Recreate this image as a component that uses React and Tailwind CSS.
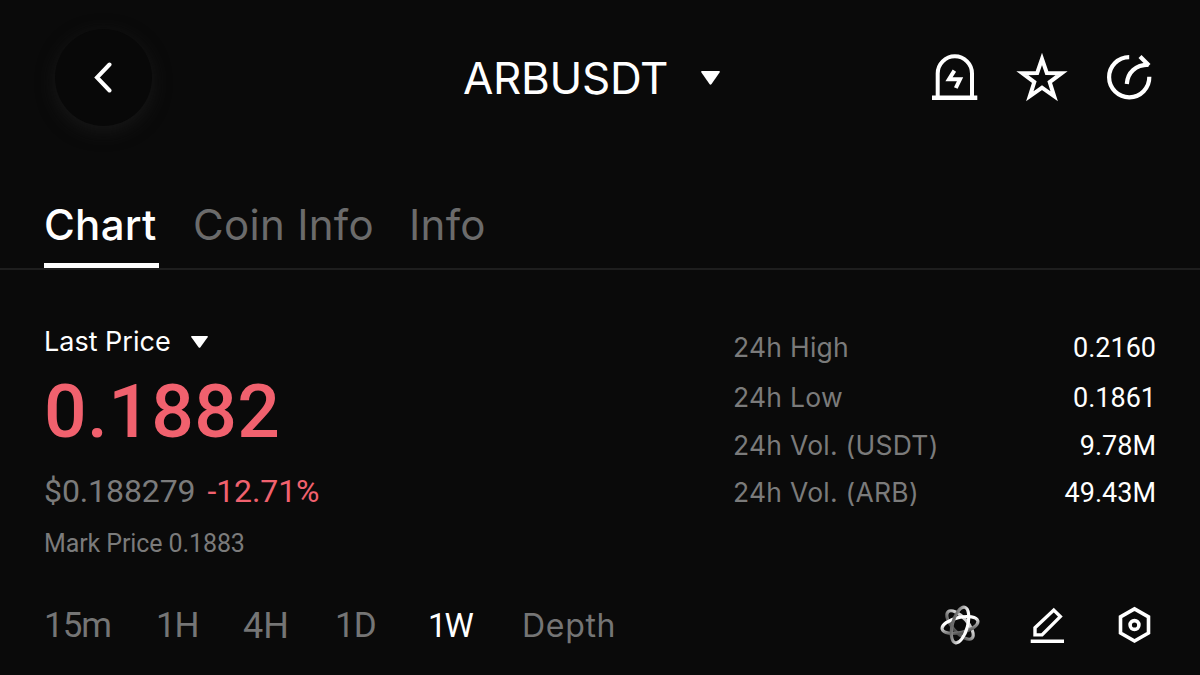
const TABS = [
  { label: 'Chart', active: true, className: 'w-[115px] tracking-[0.3px]' },
  { label: 'Coin Info', className: 'ml-[34px] w-[180px] tracking-[0.3px]' },
  { label: 'Info', className: 'ml-[36px] tracking-[0.3px]' },
]

const STATS = [
  { label: '24h High', value: '0.2160', className: 'h-[50px]' },
  { label: '24h Low', value: '0.1861', className: 'h-[50px]' },
  { label: '24h Vol. (USDT)', value: '9.78M', className: 'h-[46px]' },
  { label: '24h Vol. (ARB)', value: '49.43M', className: 'h-[48px]' },
]

const INTERVALS = [
  { label: '15m', className: 'w-[112px] text-[35px] tracking-[-1px]' },
  { label: '1H', className: 'w-[87px] text-[35px] tracking-[-1.200px]' },
  { label: '4H', className: 'w-[92px] text-[36px]' },
  { label: '1D', className: 'w-[93px] text-[35px] tracking-[-1px]' },
  { label: '1W', active: true, className: 'w-[94px] text-[33px] tracking-[-2px]' },
  { label: 'Depth', className: 'font-[Inter,sans-serif] text-[32px] tracking-[0.7px]' },
]

function Caret({ className }) {
  return (
    <svg viewBox="0 0 18 14" preserveAspectRatio="none" className={className} fill="currentColor">
      <path d="M1 0h16q1.500 0 .6 1.600L10 13q-1 1.400-2 0L.4 1.600Q-.5 0 1 0z" />
    </svg>
  )
}

function AlertIcon() {
  return (
    <svg viewBox="0 0 52 52" className="size-[52px]" fill="none" stroke="currentColor" strokeWidth="4">
      <path d="M9.700 44V21.500a17.150 17.150 0 0 1 34.300 0V44" />
      <path d="M4 45.700h45.300" strokeWidth="4.600" />
      <path d="M26.400 18.600L21 27.300h11L27.800 36" />
    </svg>
  )
}

function StarIcon() {
  return (
    <svg viewBox="0 0 52 52" className="size-[52px]" fill="none" stroke="currentColor" strokeWidth="4" strokeMiterlimit="10">
      <path d="M26 6.900L30.800 21L45.700 21.200L33.700 30.100L38.200 44.300L26 35.700L13.800 44.300L18.300 30.100L6.300 21.200L21.200 21z" />
    </svg>
  )
}

function ShareIcon() {
  return (
    <svg viewBox="0 0 52 52" className="size-[52px]" fill="none" stroke="currentColor" strokeWidth="4.200">
      <path d="M25.200 5.100A20.100 20.100 0 1 0 45.300 24.800" />
      <path d="M22.800 32C23.500 20.500 31.500 13 44.500 12.700" />
      <path d="M36 4.600L45 13.600" />
    </svg>
  )
}

// gradients run along each ring's own (rotated) short axis
function OrbitIcon() {
  return (
    <svg viewBox="0 0 40 40" className="size-10" fill="none" strokeWidth="3.200">
      <defs>
        <linearGradient id="orbit-a" gradientUnits="userSpaceOnUse" x1="20" x2="20" y1="13" y2="25">
          <stop offset="0" stopColor="#6a6a6a" />
          <stop offset="1" stopColor="#fff" />
        </linearGradient>
        <linearGradient id="orbit-b" gradientUnits="userSpaceOnUse" x1="20" x2="20" y1="15" y2="28">
          <stop offset="0" stopColor="#d0d0d0" />
          <stop offset="1" stopColor="#4a4a4a" />
        </linearGradient>
        <linearGradient id="orbit-c" gradientUnits="userSpaceOnUse" x1="20" x2="20" y1="16" y2="28">
          <stop offset="0" stopColor="#fff" />
          <stop offset="1" stopColor="#555" />
        </linearGradient>
      </defs>
      <ellipse cx="20" cy="20" rx="17.800" ry="7.600" transform="rotate(48 20 20)" stroke="url(#orbit-b)" />
      <ellipse cx="20" cy="20" rx="18.300" ry="7.600" transform="rotate(-13 20 20)" stroke="url(#orbit-c)" />
      <ellipse cx="20" cy="20" rx="18.300" ry="7.600" transform="rotate(-75 20 20)" stroke="url(#orbit-a)" />
    </svg>
  )
}

function DrawIcon() {
  return (
    <svg viewBox="0 0 36 40" className="h-10 w-9" fill="none" stroke="currentColor" strokeWidth="3.400">
      <path d="M24.800 5.100L31.300 11.600L13 29.900H6V22.800z" />
      <path d="M1.700 36.200h33.300" strokeWidth="3.600" />
    </svg>
  )
}

function SettingsIcon() {
  return (
    <svg viewBox="0 0 36 40" className="h-10 w-9" fill="none" stroke="currentColor" strokeWidth="3.600">
      <path d="M18.500 3.900L32.500 11.900V28L18.500 36L4.500 28V11.900z" />
      <circle cx="18.500" cy="20" r="4.400" />
    </svg>
  )
}

export default function App() {
  return (
    <div className="h-[675px] w-[1200px] overflow-hidden bg-[#0a0a0a] font-[Inter,sans-serif] text-white">
      <header className="grid h-[155px] grid-cols-[408px_auto_1fr] items-center pr-11 pl-[55px]">
        <button
          type="button"
          className="flex size-[97px] items-center justify-center rounded-full bg-[#080808] shadow-[0_5px_18px_0px_#181818]"
        >
          <svg viewBox="0 0 20 32" className="mr-0.5 h-8 w-5" fill="none" stroke="currentColor" strokeWidth="4" strokeLinecap="round">
            <path d="M16.500 2.500L4 15.500L16.500 28.500" />
          </svg>
        </button>
        <div className="flex items-center gap-[33px]">
          <h1 className="text-[44px] leading-none tracking-[-0.3px]">ARBUSDT</h1>
          <Caret className="h-3.5 w-[19px]" />
        </div>
        <div className="flex justify-end gap-9">
          <AlertIcon />
          <StarIcon />
          <ShareIcon />
        </div>
      </header>

      <nav className="flex h-[115px] items-end border-b-2 border-[#1e1e1e] pl-11 text-[42px] leading-none">
        {TABS.map((tab) => (
          <div
            key={tab.label}
            className={`flex h-[64px] items-start border-b-[5px] whitespace-nowrap ${tab.className} ${
              tab.active ? 'border-white font-medium' : 'border-transparent text-[#6b6b6b]'
            }`}
          >
            {tab.label}
          </div>
        ))}
      </nav>

      <main className="flex h-[305px] justify-between pr-11 pl-11">
        <section className="pt-[56px]">
          <div className="flex h-8 items-center gap-5 text-[27px] tracking-[0px]">
            Last Price
            <Caret className="h-3 w-[17px]" />
          </div>
          <p className="mt-[15px] font-[Roboto,sans-serif] text-[75px] leading-[76px] font-medium tracking-[0.4px] text-[#f1616e]">
            0.1882
          </p>
          <p className="mt-[22px] flex gap-3 font-[Roboto,sans-serif] text-[32px] leading-10 tracking-[-0.1px] text-[#7b7b7b]">
            <span>$0.188279</span>
            <span className="text-[#f1616e]">-12.71%</span>
          </p>
          <p className="mt-[17px] font-[Roboto,sans-serif] text-[25px] leading-8 tracking-[-0.1px] text-[#7b7b7b]">Mark Price 0.1883</p>
        </section>
        <dl className="w-[423px] pt-[53px]">
          {STATS.map((stat) => (
            <div key={stat.label} className={`flex items-center justify-between ${stat.className}`}>
              <dt className="text-[26.500px] tracking-[0.25px] text-[#7b7b7b]">{stat.label}</dt>
              <dd className="font-[Roboto,sans-serif] text-[27px]">{stat.value}</dd>
            </div>
          ))}
        </dl>
      </main>

      <footer className="flex h-[100px] items-center justify-between pr-12 pl-11">
        <div className="flex items-center pt-0.5 font-[Roboto,sans-serif]">
          {INTERVALS.map((item) => (
            <span key={item.label} className={`${item.className} ${item.active ? 'text-white' : 'text-[#757575]'}`}>
              {item.label}
            </span>
          ))}
        </div>
        <div className="flex items-center">
          <OrbitIcon />
          <div className="ml-[49px]">
            <DrawIcon />
          </div>
          <div className="ml-[51px]">
            <SettingsIcon />
          </div>
        </div>
      </footer>
    </div>
  )
}
